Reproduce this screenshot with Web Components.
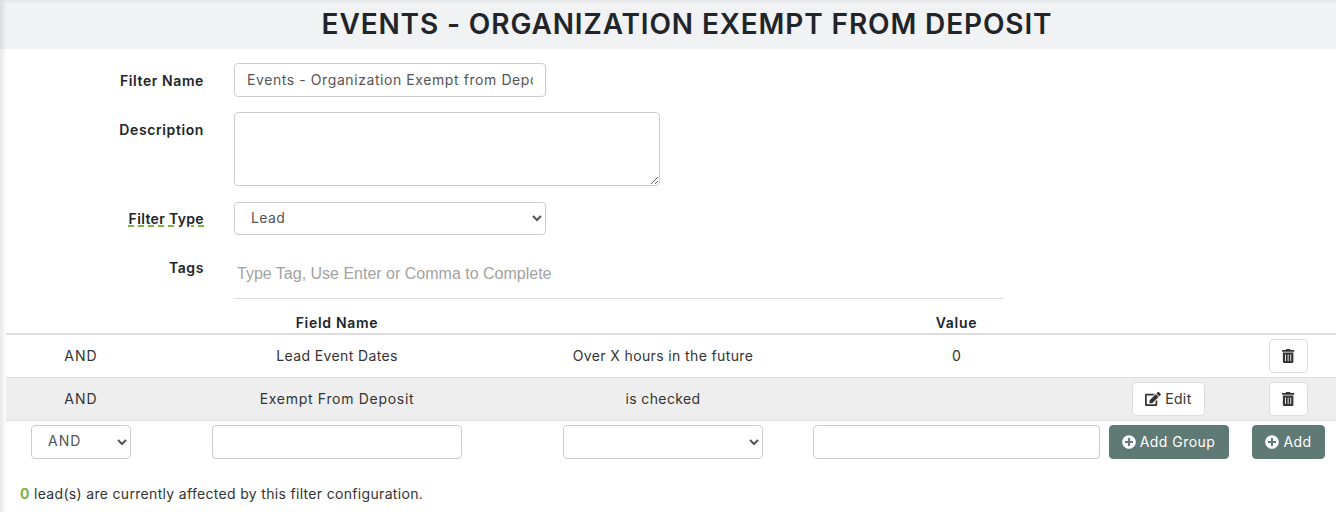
<!DOCTYPE html>
<html>
<head>
<meta charset="utf-8">
<title>Events - Organization Exempt From Deposit</title>
<style>
  html, body { margin: 0; padding: 0; height: 512px; overflow: hidden; background: #fff; }
  body { font-family: Inter, "Open Sans", sans-serif; font-size: 14px; color: #212529; }
  .wide { letter-spacing: 0.7px; }
  .caps { letter-spacing: 1px; }
</style>
</head>
<body>
<filter-page>
  <page-title slot="title">EVENTS - ORGANIZATION EXEMPT FROM DEPOSIT</page-title>

  <form-row label="Filter Name"><text-field value="Events - Organization Exempt from Deposit" spacing="0.58"></text-field></form-row>
  <form-row label="Description" gap="15"><area-field></area-field></form-row>
  <form-row label="Filter Type" marked gap="16"><select-field value="Lead" width="312" height="33" indent="16"></select-field></form-row>
  <form-row label="Tags" gap="15"><tag-field placeholder="Type Tag, Use Enter or Comma to Complete"></tag-field></form-row>

  <rule-table slot="table">
    <rule-row head>
      <span></span><span>Field Name</span><span></span><span>Value</span><span></span><span></span>
    </rule-row>
    <rule-row>
      <span class="caps">AND</span><span>Lead Event Dates</span><span>Over X hours in the future</span><span>0</span>
      <span></span><span class="ctl"><icon-button icon="trash"></icon-button></span>
    </rule-row>
    <rule-row striped>
      <span class="caps">AND</span><span class="wide">Exempt From Deposit</span><span>is checked</span><span></span>
      <span class="ctl"><icon-button icon="edit">Edit</icon-button></span><span class="ctl"><icon-button icon="trash"></icon-button></span>
    </rule-row>
    <rule-row entry>
      <span class="ctl"><select-field value="AND" width="100" indent="16" spacing="1"></select-field></span>
      <span class="ctl"><text-field width="250"></text-field></span>
      <span class="ctl"><select-field width="200"></select-field></span>
      <span class="ctl"><text-field width="287"></text-field></span>
      <span class="ctl"><icon-button icon="plus" primary style="--btn-width: 120px">Add Group</icon-button></span>
      <span class="ctl"><icon-button icon="plus" primary style="--btn-width: 73px">Add</icon-button></span>
    </rule-row>
  </rule-table>

  <affected-note slot="note" count="0">lead(s) are currently affected by this filter configuration.</affected-note>
</filter-page>

<script>
const ICONS = {
  trash: {
    box: "0 0 448 512",
    width: 12.25,
    d: "M32 464a48 48 0 0 0 48 48h288a48 48 0 0 0 48-48V128H32zm272-256a16 16 0 0 1 32 0v224a16 16 0 0 1-32 0zm-96 0a16 16 0 0 1 32 0v224a16 16 0 0 1-32 0zm-96 0a16 16 0 0 1 32 0v224a16 16 0 0 1-32 0zM432 32H312l-9.4-18.7A24 24 0 0 0 281.1 0H166.8a23.72 23.72 0 0 0-21.4 13.3L136 32H16A16 16 0 0 0 0 48v32a16 16 0 0 0 16 16h416a16 16 0 0 0 16-16V48a16 16 0 0 0-16-16z",
  },
  edit: {
    box: "0 0 576 512",
    width: 15.75,
    d: "M402.6 83.2l90.2 90.2c3.8 3.8 3.8 10 0 13.8L274.4 405.6l-92.8 10.3c-12.4 1.4-22.9-9.1-21.5-21.5l10.3-92.8L388.8 83.2c3.8-3.8 10-3.8 13.8 0zm162-22.9l-48.8-48.8c-15.2-15.2-39.9-15.2-55.2 0l-35.4 35.4c-3.8 3.8-3.8 10 0 13.8l90.2 90.2c3.8 3.8 10 3.8 13.8 0l35.4-35.4c15.2-15.3 15.2-40 0-55.2zM384 346.2V448H64V128h229.8c3.2 0 6.2-1.3 8.5-3.5l40-40c7.6-7.6 2.2-20.5-8.5-20.5H48C21.5 64 0 85.5 0 112v352c0 26.5 21.5 48 48 48h352c26.5 0 48-21.5 48-48V306.2c0-10.7-12.9-16-20.5-8.5l-40 40c-2.2 2.3-3.5 5.3-3.5 8.5z",
  },
  plus: {
    box: "0 0 512 512",
    width: 14,
    d: "M256 8C119 8 8 119 8 256s111 248 248 248 248-111 248-248S393 8 256 8zm144 276c0 6.6-5.4 12-12 12h-92v92c0 6.6-5.4 12-12 12h-56c-6.6 0-12-5.4-12-12v-92h-92c-6.6 0-12-5.4-12-12v-56c0-6.6 5.4-12 12-12h92v-92c0-6.6 5.4-12 12-12h56c6.6 0 12 5.4 12 12v92h92c6.6 0 12 5.4 12 12v56z",
  },
};

const FIELD_CSS = `
  box-sizing: border-box;
  height: 34px;
  margin: 0;
  border: 1px solid #ccc;
  border-radius: 4px;
  background: #fff;
  color: #555;
  font: 14px Inter, "Open Sans", sans-serif;
  letter-spacing: 0.38px;
`;

class FilterPage extends HTMLElement {
  constructor() {
    super();
    this.attachShadow({ mode: "open" });
    this.shadowRoot.innerHTML = `
      <style>
        :host { display: block; position: relative; width: 1374px; height: 512px; }
        :host::after {
          content: "";
          position: absolute;
          inset: 0;
          pointer-events: none;
          box-shadow: inset 5px 2px 5px -2px rgba(0, 0, 0, 0.1);
        }
        #form { display: flex; flex-direction: column; padding-top: 14px; }
      </style>
      <slot name="title"></slot>
      <div id="form"><slot></slot></div>
      <slot name="table"></slot>
      <slot name="note"></slot>
    `;
  }
}

class PageTitle extends HTMLElement {
  constructor() {
    super();
    this.attachShadow({ mode: "open" });
    this.shadowRoot.innerHTML = `
      <style>
        :host {
          display: block;
          height: 49px;
          background: #f1f2f4;
          text-align: center;
          font-size: 28px;
          line-height: 48px;
          font-weight: 600;
          letter-spacing: 0.88px;
          color: #212529;
        }
      </style>
      <slot></slot>
    `;
  }
}

class FormRow extends HTMLElement {
  constructor() {
    super();
    this.attachShadow({ mode: "open" });
    const label = this.getAttribute("label");
    const gap = this.getAttribute("gap") || 0;
    const marked = this.hasAttribute("marked");
    this.shadowRoot.innerHTML = `
      <style>
        :host { display: flex; gap: 30px; margin-top: ${gap}px; }
        label {
          width: 204px;
          flex: none;
          padding-top: ${marked ? 8 : 9}px;
          text-align: right;
          font-weight: 600;
          font-size: 14px;
          line-height: 18px;
          letter-spacing: 0.6px;
          color: #212529;
        }
        .marked {
          letter-spacing: 0.35px;
          text-decoration: underline dashed #7cb342 2px;
          text-underline-offset: 1px;
        }
      </style>
      <label><span class="${marked ? "marked" : ""}">${label}</span></label>
      <slot></slot>
    `;
  }
}

class TextField extends HTMLElement {
  constructor() {
    super();
    this.attachShadow({ mode: "open" });
    const width = this.getAttribute("width") || 312;
    const spacing = this.getAttribute("spacing") || 0.38;
    this.shadowRoot.innerHTML = `
      <style>
        :host { display: block; }
        input {
          ${FIELD_CSS}
          width: ${width}px;
          padding: 0 12px 2px;
          display: block;
          outline: none;
          letter-spacing: ${spacing}px;
        }
      </style>
      <input type="text">
    `;
    this.shadowRoot.querySelector("input").value = this.getAttribute("value") || "";
  }
}

class AreaField extends HTMLElement {
  constructor() {
    super();
    this.attachShadow({ mode: "open" });
    this.shadowRoot.innerHTML = `
      <style>
        :host { display: block; }
        textarea { ${FIELD_CSS} display: block; width: 426px; height: 74px; padding: 6px 12px; outline: none; }
      </style>
      <textarea></textarea>
    `;
  }
}

class SelectField extends HTMLElement {
  constructor() {
    super();
    this.attachShadow({ mode: "open" });
    const value = this.getAttribute("value") || "";
    const width = this.getAttribute("width") || 312;
    const height = this.getAttribute("height") || 34;
    const indent = this.getAttribute("indent") || 12;
    const spacing = this.getAttribute("spacing") || 0.38;
    this.shadowRoot.innerHTML = `
      <style>
        :host { display: block; }
        select {
          ${FIELD_CSS}
          display: block;
          width: ${width}px;
          height: ${height}px;
          padding: 0 12px ${height == 33 ? 2 : 4}px ${indent - 4}px;
          outline: none;
          letter-spacing: ${spacing}px;
        }
      </style>
      <select><option>${value}</option></select>
    `;
  }
}

class TagField extends HTMLElement {
  constructor() {
    super();
    this.attachShadow({ mode: "open" });
    this.shadowRoot.innerHTML = `
      <style>
        :host { display: block; width: 769px; height: 49px; border-bottom: 1px solid #ddd; box-sizing: border-box; }
        input {
          box-sizing: border-box;
          width: 100%;
          height: 48px;
          margin-top: 0;
          padding: 0 3px;
          border: 0;
          outline: none;
          background: transparent;
          font: 16px "Liberation Sans", Arial, sans-serif;
        }
        input::placeholder { color: #a2a2a2; opacity: 1; }
      </style>
      <input type="text" placeholder="${this.getAttribute("placeholder")}">
    `;
  }
}

class RuleTable extends HTMLElement {
  constructor() {
    super();
    this.attachShadow({ mode: "open" });
    this.shadowRoot.innerHTML = `
      <style>
        :host { display: block; margin-left: 6px; margin-top: 14px; width: 1339px; }
      </style>
      <slot></slot>
    `;
  }
}

class RuleRow extends HTMLElement {
  constructor() {
    super();
    this.attachShadow({ mode: "open" });
    const cellPad = this.hasAttribute("head") ? 0 : 2;
    this.shadowRoot.innerHTML = `
      <style>
        :host {
          display: grid;
          grid-template-columns: 150px 362px 290px 297px 127px 113px;
          align-items: center;
          justify-items: center;
          box-sizing: border-box;
          height: 43px;
          border-bottom: 1px solid #ddd;
          font-size: 14px;
          letter-spacing: 0.38px;
          color: #333;
        }
        :host([head]) {
          height: 22px;
          border-bottom: 2px solid #ddd;
          font-weight: 600;
          letter-spacing: 0.7px;
          color: #212529;
          line-height: 18px;
        }
        :host([striped]) { background: #eee; }
        :host([entry]) { height: 42px; border-bottom: 0; }
        ::slotted(span) { display: block; padding-bottom: ${cellPad}px; }
        ::slotted(.ctl) { padding-bottom: 0; }
      </style>
      <slot></slot>
    `;
  }
}

class IconButton extends HTMLElement {
  constructor() {
    super();
    this.attachShadow({ mode: "open" });
    const icon = ICONS[this.getAttribute("icon")];
    this.shadowRoot.innerHTML = `
      <style>
        :host { display: block; }
        button {
          display: flex;
          align-items: center;
          justify-content: center;
          gap: 4px;
          box-sizing: border-box;
          height: 34px;
          width: var(--btn-width, auto);
          min-width: 39px;
          padding: 0 12px;
          border: 1px solid #ddd;
          border-radius: 4px;
          background: #fff;
          color: #333;
          font: 14px Inter, "Open Sans", sans-serif;
          letter-spacing: 0.38px;
        }
        :host([primary]) button {
          border-color: #5f7a75;
          background: #5f7a75;
          color: #fff;
          letter-spacing: 0.45px;
        }
        #text { padding-bottom: 2px; }
        #text:empty { display: none; }
        svg { width: ${icon.width}px; height: 14px; fill: currentColor; flex: none; }
      </style>
      <button type="button">
        <svg viewBox="${icon.box}"><path d="${icon.d}"></path></svg><span id="text"><slot></slot></span>
      </button>
    `;
    if (!this.textContent.trim()) {
      this.shadowRoot.querySelector("#text").remove();
    }
  }
}

class AffectedNote extends HTMLElement {
  constructor() {
    super();
    this.attachShadow({ mode: "open" });
    this.shadowRoot.innerHTML = `
      <style>
        :host {
          display: block;
          margin-top: 21px;
          padding-left: 20px;
          font-size: 14px;
          line-height: 20px;
          letter-spacing: 0.32px;
          color: #333;
        }
        b { color: #7cb342; font-weight: 700; }
      </style>
      <b>${this.getAttribute("count")}</b> <slot></slot>
    `;
  }
}

customElements.define("filter-page", FilterPage);
customElements.define("page-title", PageTitle);
customElements.define("form-row", FormRow);
customElements.define("text-field", TextField);
customElements.define("area-field", AreaField);
customElements.define("select-field", SelectField);
customElements.define("tag-field", TagField);
customElements.define("rule-table", RuleTable);
customElements.define("rule-row", RuleRow);
customElements.define("icon-button", IconButton);
customElements.define("affected-note", AffectedNote);
</script>
</body>
</html>
